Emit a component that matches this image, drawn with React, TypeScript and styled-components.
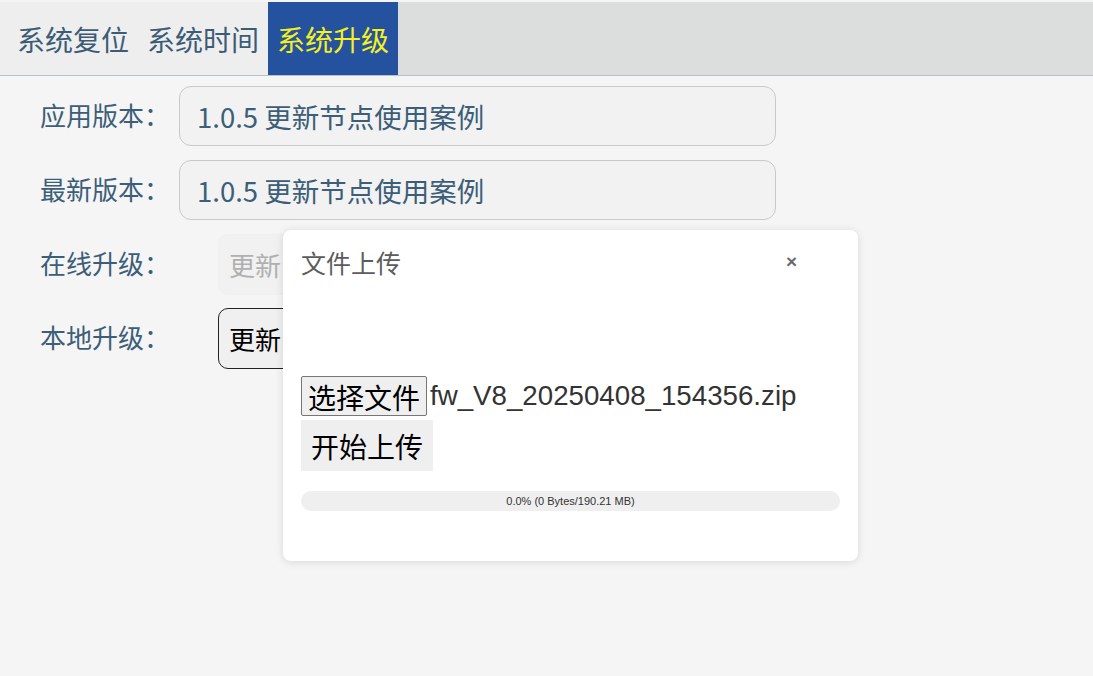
import React from "react";
import styled, { createGlobalStyle } from "styled-components";

const GlobalStyle = createGlobalStyle`
  html, body {
    margin: 0;
    padding: 0;
    background: #f5f5f5;
    font-family: "Noto Sans CJK SC", "Liberation Sans", sans-serif;
  }
  * {
    box-sizing: border-box;
  }
`;

const tabs = ["系统复位", "系统时间", "系统升级"];

const rows = [
  { label: "应用版本：", value: "1.0.5 更新节点使用案例" },
  { label: "最新版本：", value: "1.0.5 更新节点使用案例" },
];

const App: React.FC = () => {
  return (
    <Page>
      <GlobalStyle />
      <TopBar>
        <TabGroup>
          {tabs.map((t, i) => (
            <Tab key={t} active={i === 2}>
              {t}
            </Tab>
          ))}
        </TabGroup>
      </TopBar>

      <Form>
        {rows.map((r) => (
          <Row key={r.label}>
            <Label>{r.label}</Label>
            <ValueBox>{r.value}</ValueBox>
          </Row>
        ))}
        <Row>
          <Label>在线升级：</Label>
          <UpdateButton disabled>更新</UpdateButton>
        </Row>
        <Row>
          <Label>本地升级：</Label>
          <UpdateButton>更新</UpdateButton>
        </Row>
      </Form>

      <Modal>
        <ModalHeader>
          <ModalTitle>文件上传</ModalTitle>
          <CloseButton>×</CloseButton>
        </ModalHeader>
        <ModalBody>
          <FileRow>
            <ChooseButton>选择文件</ChooseButton>
            <FileName>fw_V8_20250408_154356.zip</FileName>
          </FileRow>
          <StartButton>开始上传</StartButton>
          <Progress>0.0% (0 Bytes/190.21 MB)</Progress>
        </ModalBody>
      </Modal>
    </Page>
  );
};

export default App;

const Page = styled.div`
  position: relative;
  min-height: 676px;
  padding-top: 2px;
`;

const TopBar = styled.div`
  display: flex;
  height: 74px;
  background: #dcdddd;
  border-bottom: 1px solid #b8c1cc;
`;

const TabGroup = styled.div`
  display: flex;
  padding-left: 8px;
  background: #eeeeee;
`;

const Tab = styled.div<{ active?: boolean }>`
  display: flex;
  align-items: center;
  padding: 0 9px;
  font-size: 28px;
  color: ${(p) => (p.active ? "#f7f01c" : "#3c5c76")};
  background: ${(p) => (p.active ? "#25529f" : "transparent")};
  cursor: pointer;
`;

const Form = styled.div`
  display: flex;
  flex-direction: column;
  gap: 14px;
  padding: 10px 0 0 40px;
`;

const Row = styled.div`
  display: flex;
  align-items: center;
  height: 60px;
`;

const Label = styled.span`
  width: 139px;
  margin-top: -3px;
  font-size: 26px;
  color: #3c5e78;
`;

const ValueBox = styled.div`
  display: flex;
  align-items: center;
  width: 597px;
  height: 60px;
  padding-left: 17px;
  border: 1px solid #c9c9cc;
  border-radius: 12px;
  background: #f2f2f2;
  font-size: 27.5px;
  color: #3c5e78;
`;

const UpdateButton = styled.button`
  width: 140px;
  height: 61px;
  margin-left: 39px;
  padding: 0 10px;
  text-align: left;
  border-radius: 10px;
  font-family: "Noto Sans CJK SC", sans-serif;
  font-size: 26px;
  color: #000;
  background: #f0f0f0;
  border: 1px solid #222;

  &:disabled {
    color: #b0b0b0;
    background: #f1f1f1;
    border-color: #efefef;
  }
`;

const Modal = styled.div`
  position: absolute;
  left: 283px;
  top: 230px;
  width: 575px;
  height: 331px;
  padding: 0 18px;
  background: #fff;
  border-radius: 8px;
  box-shadow: 0 1px 8px rgba(0, 0, 0, 0.12);
`;

const ModalHeader = styled.div`
  display: flex;
  align-items: center;
  justify-content: space-between;
  height: 64px;
`;

const ModalTitle = styled.span`
  font-size: 25px;
  color: #5c5c5c;
`;

const CloseButton = styled.span`
  margin-right: 43px;
  font-family: "Liberation Sans", sans-serif;
  font-size: 19px;
  font-weight: bold;
  color: #6a6a6a;
  cursor: pointer;
`;

const ModalBody = styled.div`
  display: flex;
  flex-direction: column;
  align-items: flex-start;
  padding-top: 82px;
`;

const FileRow = styled.div`
  display: flex;
  align-items: center;
  height: 40px;
`;

const ChooseButton = styled.button`
  height: 40px;
  padding: 0 6px;
  font-family: "Liberation Sans", "Noto Sans CJK SC", sans-serif;
  font-size: 28px;
  color: #000;
  background: #efefef;
  border: 1px solid #767676;
  border-radius: 2px;
`;

const FileName = styled.span`
  margin-left: 3px;
  font-family: "Liberation Sans", sans-serif;
  font-size: 27.7px;
  color: #333;
`;

const StartButton = styled.button`
  height: 51px;
  margin-top: 4px;
  padding: 0 10px;
  font-family: "Liberation Sans", "Noto Sans CJK SC", sans-serif;
  font-size: 28px;
  color: #000;
  background: #efefef;
  border: none;
`;

const Progress = styled.div`
  display: flex;
  align-items: center;
  justify-content: center;
  width: 539px;
  height: 20px;
  margin-top: 20px;
  border-radius: 10px;
  background: #efefef;
  font-family: "Liberation Sans", sans-serif;
  font-size: 11px;
  color: #333;
`;
